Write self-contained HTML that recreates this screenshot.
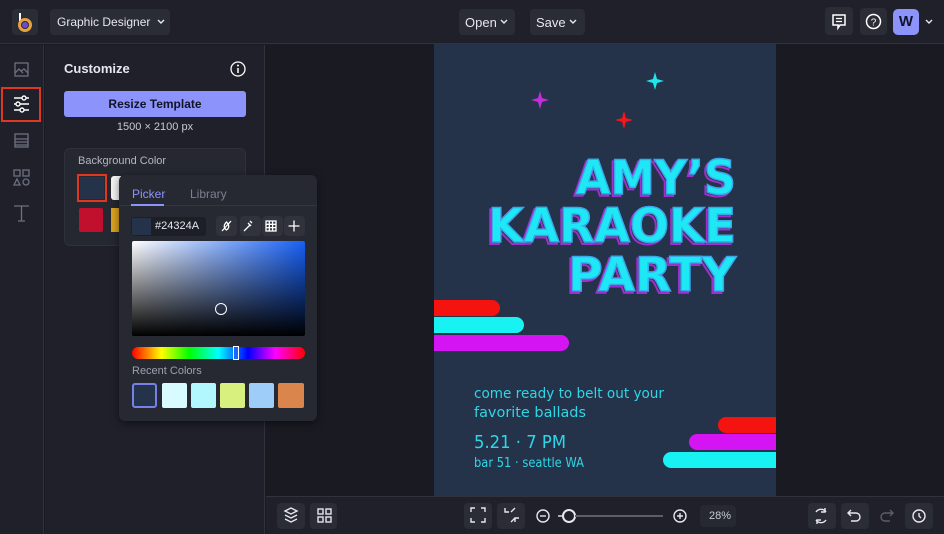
<!DOCTYPE html>
<html><head><meta charset="utf-8"><style>
*{box-sizing:border-box;margin:0;padding:0}
body{width:944px;height:534px;overflow:hidden;background:#1a1b22;font-family:"Liberation Sans",sans-serif;color:#e6e7ee;position:relative}
.a{position:absolute}
.btn{position:absolute;background:#2a2c36;border-radius:4px}
svg{position:absolute}
</style></head><body>
<div class="a" style="left:0;top:0;width:944px;height:44px;background:#1f2029;border-bottom:1px solid #30323d"></div>
<div class="btn" style="left:12px;top:9px;width:26px;height:26px"></div>
<svg style="left:12px;top:9px" width="26" height="26"><line x1="8" y1="4" x2="8" y2="16" stroke="#fff" stroke-width="2"/><circle cx="13" cy="16" r="5.5" fill="none" stroke="#e9a23b" stroke-width="3"/><circle cx="13" cy="16" r="3" fill="#6a4bd6"/></svg>
<div class="btn" style="left:50px;top:9px;width:120px;height:26px"></div>
<div class="a" style="left:57px;top:15px;font-size:12px;color:#e6e7ee">Graphic Designer</div>
<div class="btn" style="left:459px;top:9px;width:56px;height:26px"></div>
<div class="a" style="left:465px;top:15px;font-size:13px">Open</div>
<div class="btn" style="left:530px;top:9px;width:55px;height:26px"></div>
<div class="a" style="left:536px;top:15px;font-size:13px">Save</div>
<svg style="left:0;top:0" width="944" height="44" stroke="#e6e7ee" stroke-width="1.4" fill="none"><path d="M158 20l3 3 3-3M501 20l3 3 3-3M570 20l3 3 3-3M926 20l3 3 3-3"/></svg>
<div class="btn" style="left:825px;top:7px;width:28px;height:28px"></div>
<svg style="left:825px;top:7px" width="28" height="28"><path d="M8 8h12v10h-5l-2 3v-3H8z" fill="none" stroke="#fff" stroke-width="1.5"/><path d="M11 11.5h6M11 14.5h6" stroke="#fff" stroke-width="1.3"/></svg>
<div class="btn" style="left:860px;top:8px;width:27px;height:27px"></div>
<svg style="left:860px;top:8px" width="27" height="27"><circle cx="13.5" cy="13.5" r="7" fill="none" stroke="#fff" stroke-width="1.5"/><text x="13.5" y="17.5" font-size="10" fill="#fff" text-anchor="middle" font-family="Liberation Sans">?</text></svg>
<div class="a" style="left:893px;top:9px;width:26px;height:26px;background:#8c94fb;border-radius:5px;color:#11132a;font-weight:bold;font-size:15px;text-align:center;line-height:26px">W</div>
<div class="a" style="left:0;top:45px;width:44px;height:489px;background:#1f2029;border-right:1px solid #30323d"></div>
<svg style="left:0;top:45px" width="44" height="190" stroke="#6d7080" fill="none" stroke-width="1.3">
<rect x="15" y="18" width="13" height="13"/><path d="M15 28l4-4 4 4M21 26l3-2 4 4"/>
<rect x="15" y="89" width="13" height="13"/><path d="M15 94h13M15 97h13M15 100h13"/>
<rect x="14" y="125" width="6" height="6"/><rect x="23" y="125" width="6" height="6"/><path d="M14 140l3-6 3 6z"/><circle cx="26" cy="137" r="3"/>
<path d="M14 161h15M21.5 161v15M18 176h7"/>
</svg>
<div class="a" style="left:1px;top:87px;width:40px;height:35px;border:2px solid #e2371f"></div>
<svg style="left:1px;top:87px" width="40" height="35" stroke="#fff" stroke-width="1.4" fill="none"><path d="M13 11h15M13 17h15M13 23h15"/><circle cx="23" cy="11" r="2" fill="#1f2029"/><circle cx="17" cy="17" r="2" fill="#1f2029"/><circle cx="21" cy="23" r="2" fill="#1f2029"/></svg>
<div class="a" style="left:45px;top:45px;width:220px;height:489px;background:#1f2029;border-right:1px solid #30323d"></div>
<div class="a" style="left:64px;top:61px;font-size:13px;font-weight:bold">Customize</div>
<svg style="left:229px;top:60px" width="18" height="18"><circle cx="9" cy="9" r="7" fill="none" stroke="#fff" stroke-width="1.3"/><path d="M9 8v5" stroke="#fff" stroke-width="1.5"/><circle cx="9" cy="5.5" r="1" fill="#fff"/></svg>
<div class="a" style="left:64px;top:91px;width:182px;height:26px;background:#8c94fb;border-radius:3px;color:#11132a;font-size:12px;font-weight:bold;text-align:center;line-height:26px">Resize Template</div>
<div class="a" style="left:64px;top:121px;width:182px;text-align:center;font-size:11px;color:#c8cad4">1500 × 2100 px</div>
<div class="a" style="left:64px;top:148px;width:182px;height:98px;background:#252731;border-radius:6px;border:1px solid #2e303b"></div>
<div class="a" style="left:78px;top:155px;font-size:11px;color:#b4b6c2">Background Color</div>
<div class="a" style="left:77px;top:174px;width:30px;height:28px;border:2px solid #e2371f"></div>
<div class="a" style="left:80px;top:177px;width:24px;height:22px;background:#24324a"></div>
<div class="a" style="left:111px;top:176px;width:10px;height:24px;background:#f2f2f2;border-radius:3px 0 0 3px"></div>
<div class="a" style="left:79px;top:208px;width:24px;height:24px;background:#c1102e;border-radius:2px"></div>
<div class="a" style="left:111px;top:208px;width:10px;height:24px;background:#d8a01f"></div>
<div class="a" style="left:119px;top:175px;width:198px;height:246px;background:#262832;border-radius:6px;box-shadow:0 2px 8px rgba(0,0,0,.5)"></div>
<div class="a" style="left:119px;top:205px;width:198px;height:1px;background:#33353f"></div>
<div class="a" style="left:132px;top:187px;font-size:12px;color:#8c94fb">Picker</div>
<div class="a" style="left:131px;top:204px;width:33px;height:2px;background:#8c94fb"></div>
<div class="a" style="left:190px;top:187px;font-size:12px;color:#7d8090">Library</div>
<div class="a" style="left:131px;top:217px;width:75px;height:19px;background:#1d1f27;border-radius:3px"></div>
<div class="a" style="left:132px;top:218px;width:19px;height:17px;background:#24324a"></div>
<div class="a" style="left:155px;top:220px;font-size:11px;color:#e6e7ee">#24324A</div>
<div class="btn" style="left:216px;top:216px;width:21px;height:20px;background:#30323c"></div>
<div class="btn" style="left:240px;top:216px;width:21px;height:20px;background:#30323c"></div>
<div class="btn" style="left:262px;top:216px;width:21px;height:20px;background:#30323c"></div>
<div class="btn" style="left:284px;top:216px;width:21px;height:20px;background:#30323c"></div>
<svg style="left:216px;top:216px" width="90" height="20" stroke="#fff" stroke-width="1.3" fill="none">
<path d="M10.5 6c3 3 3 6 0 8-3-2-3-5 0-8z M6 15L15 5"/>
<path d="M28 15l6-6M32 7l3 3M34 5l2 2"/>
<rect x="50" y="5" width="10" height="10"/><path d="M53.3 5v10M56.6 5v10M50 8.3h10M50 11.6h10"/>
<path d="M78 4.5v11M72.5 10h11"/></svg>
<div class="a" style="left:132px;top:241px;width:173px;height:95px;border-radius:2px;background:linear-gradient(to bottom,rgba(0,0,0,0),#000),linear-gradient(to right,#fff,#1660f5)"></div>
<div class="a" style="left:215px;top:303px;width:12px;height:12px;border:1.5px solid #fff;border-radius:50%"></div>
<div class="a" style="left:132px;top:347px;width:173px;height:12px;border-radius:6px;background:linear-gradient(to right,#f00,#ff0 17%,#0f0 33%,#0ff 50%,#00f 67%,#f0f 83%,#f00)"></div>
<div class="a" style="left:233px;top:346px;width:6px;height:14px;border:1.5px solid #fff;background:#1668ff"></div>
<div class="a" style="left:132px;top:365px;font-size:11px;color:#9ea0ad">Recent Colors</div>
<div class="a" style="left:132px;top:383px;width:25px;height:25px;background:#24324a;border:2px solid #7780e8;border-radius:3px"></div>
<div class="a" style="left:162px;top:383px;width:25px;height:25px;background:#d8fbff;border-radius:2px"></div>
<div class="a" style="left:191px;top:383px;width:25px;height:25px;background:#b2f7fd;border-radius:2px"></div>
<div class="a" style="left:220px;top:383px;width:25px;height:25px;background:#d7f07e;border-radius:2px"></div>
<div class="a" style="left:249px;top:383px;width:25px;height:25px;background:#9ecdfa;border-radius:2px"></div>
<div class="a" style="left:278px;top:383px;width:26px;height:25px;background:#d9854b;border-radius:2px"></div>
<div class="a" style="left:434px;top:44px;width:342px;height:452px;background:#24324a;overflow:hidden">
<svg style="left:0;top:0" width="342" height="452">
<path d="M106 47l2 7 7 2-7 2-2 7-2-7-7-2 7-2z" fill="#c52dd8"/>
<path d="M221 28l2 7 7 2-7 2-2 7-2-7-7-2 7-2z" fill="#1ee6ea"/>
<path d="M190 67l2 7 7 2-7 2-2 7-2-7-7-2 7-2z" fill="#f0161d"/>
<rect x="-10" y="256" width="76" height="16" rx="8" fill="#f5130f"/>
<rect x="-10" y="273" width="100" height="16" rx="8" fill="#19f2f3"/>
<rect x="-10" y="291" width="145" height="16" rx="8" fill="#d414f3"/>
<rect x="284" y="373" width="80" height="16" rx="8" fill="#f5130f"/>
<rect x="255" y="390" width="110" height="16" rx="8" fill="#d414f3"/>
<rect x="229" y="408" width="130" height="16" rx="8" fill="#19f2f3"/>
<g font-family="DejaVu Sans" font-weight="bold" font-size="47" text-anchor="end">
<g fill="none" stroke="#a02fd0" stroke-width="2" transform="translate(-2,2)">
<text x="302" y="150" textLength="160" lengthAdjust="spacingAndGlyphs">AMY’S</text>
<text x="302" y="198" textLength="248" lengthAdjust="spacingAndGlyphs">KARAOKE</text>
<text x="302" y="247" textLength="168" lengthAdjust="spacingAndGlyphs">PARTY</text></g>
<g fill="#1ee8f5" stroke="#3aa8e8" stroke-width="1.5">
<text x="302" y="150" textLength="160" lengthAdjust="spacingAndGlyphs">AMY’S</text>
<text x="302" y="198" textLength="248" lengthAdjust="spacingAndGlyphs">KARAOKE</text>
<text x="302" y="247" textLength="168" lengthAdjust="spacingAndGlyphs">PARTY</text></g>
</g>
<g font-family="DejaVu Sans" fill="#2ed6e6">
<text x="40" y="354" font-size="14" textLength="190" lengthAdjust="spacingAndGlyphs">come ready to belt out your</text>
<text x="40" y="373" font-size="14" textLength="112" lengthAdjust="spacingAndGlyphs">favorite ballads</text>
<text x="40" y="404" font-size="18" textLength="92" lengthAdjust="spacingAndGlyphs">5.21 · 7 PM</text>
<text x="40" y="423" font-size="13" textLength="110" lengthAdjust="spacingAndGlyphs">bar 51 · seattle WA</text>
</g></svg></div>
<div class="a" style="left:266px;top:496px;width:678px;height:38px;background:#1f2029;border-top:1px solid #30323d"></div>
<div class="btn" style="left:277px;top:503px;width:28px;height:26px"></div>
<div class="btn" style="left:310px;top:503px;width:27px;height:26px"></div>
<div class="btn" style="left:464px;top:503px;width:28px;height:26px"></div>
<div class="btn" style="left:497px;top:503px;width:28px;height:26px"></div>
<div class="btn" style="left:700px;top:505px;width:36px;height:22px;background:#262832"></div>
<div class="a" style="left:709px;top:510px;font-size:11px;color:#c8cad4">28%</div>
<div class="btn" style="left:808px;top:503px;width:28px;height:26px"></div>
<div class="btn" style="left:841px;top:503px;width:28px;height:26px"></div>
<div class="btn" style="left:905px;top:503px;width:28px;height:26px"></div>
<svg style="left:266px;top:496px" width="678" height="38" stroke="#e6e7ee" stroke-width="1.4" fill="none">
<path d="M19 15l6-3 6 3-6 3zM19 19l6 3 6-3M19 23l6 3 6-3"/>
<rect x="52" y="13" width="5" height="5"/><rect x="60" y="13" width="5" height="5"/><rect x="52" y="21" width="5" height="5"/><rect x="60" y="21" width="5" height="5"/>
<path d="M205 16v-4h4M215 12h4v4M219 22v4h-4M209 26h-4v-4"/>
<path d="M239 12v4h4M245 16l4-4M253 22h-4v4M249 22l-4 4"/>
<circle cx="277" cy="20" r="6"/><path d="M274 20h6"/>
<path d="M296 20h-4"/><circle cx="303" cy="20" r="6" stroke-width="2"/><path d="M309 20h88" stroke="#5b5e6a" stroke-width="2"/>
<circle cx="414" cy="20" r="6"/><path d="M411 20h6M414 17v6"/>
<path d="M560 16a6 6 0 0 0-10 0M550 24a6 6 0 0 0 10 0M559 12v4h-4M551 28v-4h4"/>
<path d="M582 17h8a4 4 0 0 1 0 8h-5M585 14l-3 3 3 3"/>
<path d="M627 17h-8a4 4 0 0 0 0 8h5M624 14l3 3-3 3" stroke="#5b5e6a"/>
<circle cx="653" cy="20" r="6"/><path d="M653 17v3l2 2"/>
</svg>
</body></html>
